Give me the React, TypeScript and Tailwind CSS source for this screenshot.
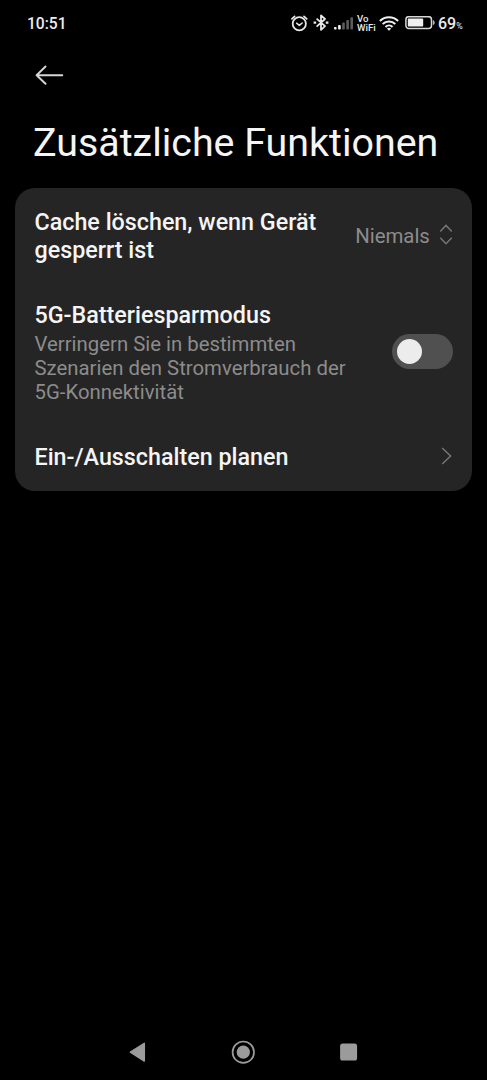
import React, { useState } from 'react';

const AlarmIcon: React.FC = () => (
  <svg width="17" height="17" viewBox="0 0 17 17" fill="none" stroke="#e8e8e8" strokeLinecap="round" strokeLinejoin="round">
    <circle cx="8.3" cy="8.8" r="6.6" strokeWidth="1.8" />
    <path d="M5.6 8.2 8.3 10.4l2.9-2.4" strokeWidth="1.5" />
    <path d="M.9 3.8 3.6 1.3M15.7 3.8 13 1.3" strokeWidth="1.7" />
  </svg>
);

const BluetoothIcon: React.FC = () => (
  <svg width="16" height="18" viewBox="0 0 16 18" fill="none" stroke="#e8e8e8" strokeWidth="1.8" strokeLinejoin="round">
    <path d="M3.6 4.6 12 12.2 8 15.8V1.4L12 5 3.6 12.6" />
    <path d="M.6 8.6h2.6M12.8 8.6h2.6" strokeWidth="2.2" />
  </svg>
);

const SignalIcon: React.FC = () => (
  <svg width="20" height="13" viewBox="0 0 20 13">
    <rect x="0" y="10" width="2.6" height="2.6" rx=".8" fill="#f0f0f0" />
    <rect x="4.1" y="8" width="2.6" height="4.6" rx=".8" fill="#f0f0f0" />
    <rect x="8.2" y="5.6" width="2.6" height="7" rx=".8" fill="#5c5c5c" />
    <rect x="12.3" y="3" width="2.6" height="9.6" rx=".8" fill="#5c5c5c" />
    <rect x="16.4" y=".3" width="2.6" height="12.3" rx=".8" fill="#5c5c5c" />
  </svg>
);

const WifiIcon: React.FC = () => (
  <svg width="20" height="15" viewBox="0 0 20 15" fill="none" stroke="#f0f0f0" strokeWidth="2.1">
    <path d="M.9 5a13 13 0 0 1 18.2 0" />
    <path d="M3.7 8a9 9 0 0 1 12.6 0" />
    <path d="M6.5 10.9a5 5 0 0 1 7 0" />
    <path d="M10 14.8 7.9 12.7a3 3 0 0 1 4.2 0z" fill="#f0f0f0" stroke="none" />
  </svg>
);

const BatteryIcon: React.FC = () => (
  <svg width="31" height="14" viewBox="0 0 31 14">
    <rect x=".9" y=".7" width="25.6" height="11.8" rx="3" fill="none" stroke="#d8d8d8" strokeWidth="1.5" />
    <rect x="2.8" y="2.6" width="15.4" height="8" rx=".8" fill="#f0f0f0" />
    <path d="M28.3 4.6c1.3.3 1.3 3.8 0 4.1z" fill="#d8d8d8" stroke="#d8d8d8" strokeWidth=".6" />
  </svg>
);

const StatusBar: React.FC = () => (
  <div className="flex h-[46px] items-center pl-[27px] text-[#ececec]">
    <div className="w-[263px] pt-[3px] text-[15.6px] font-medium">10:51</div>
    <div className="flex items-center">
      <div className="w-[23px] pl-[.5px]"><AlarmIcon /></div>
      <div className="w-[21px]"><BluetoothIcon /></div>
      <div className="w-[23px] pt-[1px]"><SignalIcon /></div>
      <div className="w-[22px] text-[9.6px] leading-[9px] font-medium">
        <div className="h-[9px]">Vo</div>
        <div className="h-[9px]">WiFi</div>
      </div>
      <div className="w-[26px]"><WifiIcon /></div>
      <div className="w-[33px]"><BatteryIcon /></div>
      <div className="flex items-baseline pt-[2px]">
        <span className="text-base font-medium">69</span>
        <span className="text-[8.8px]">%</span>
      </div>
    </div>
  </div>
);

const App: React.FC = () => {
  const [batterySaver, setBatterySaver] = useState(false);

  return (
    <div className="flex h-[1080px] w-[487px] flex-col overflow-hidden bg-black font-['Roboto','Liberation_Sans',sans-serif]">
      <StatusBar />

      <header className="pt-[19px] pl-[33px]">
        <button className="block" aria-label="Zurück">
          <svg width="32" height="20" viewBox="0 0 32 20" fill="none" stroke="#d6d6d6" strokeWidth="1.9" strokeLinecap="round" strokeLinejoin="round">
            <path d="M29.3 10.2H3.6M12.5 1.5 3.6 10.2l8.9 8.6" />
          </svg>
        </button>
        <h1 className="mt-[34px] text-[39.4px] leading-[48px] whitespace-nowrap text-[#f5f5f5]">
          Zusätzliche Funktionen
        </h1>
      </header>

      <main className="mx-[15px] mt-[21.4px] h-[302.6px] rounded-[20px] bg-[#252525] pr-[19.5px] pl-[19.5px]">
        <div className="flex h-[95px] items-center justify-between">
          <h2 className="w-[300px] pt-[1.4px] text-[23.3px] leading-[27.5px] font-medium text-[#f5f5f5]">
            Cache löschen, wenn Gerät gesperrt ist
          </h2>
          <div className="flex shrink-0 items-center gap-[8.6px] text-[20.4px] text-[#8c8c8c]">
            Niemals
            <svg className="mb-px" width="14" height="22" viewBox="0 0 14 22" fill="none" stroke="#757575" strokeWidth="1.5">
              <path d="M1.2 7.4 7 1.4l5.8 6M1.2 13.7l5.8 6 5.8-6" />
            </svg>
          </div>
        </div>

        <div className="flex h-[139px] items-center justify-between">
          <div>
            <h2 className="text-[23.3px] leading-[28px] font-medium text-[#f5f5f5]">5G-Batteriesparmodus</h2>
            <p className="mt-[3px] w-[320px] text-[20.35px] leading-6 text-[#8c8c8c]">
              Verringern Sie in bestimmten Szenarien den Stromverbrauch der 5G-Konnektivität
            </p>
          </div>
          <button
            role="switch"
            aria-checked={batterySaver}
            aria-label="5G-Batteriesparmodus"
            onClick={() => setBatterySaver(!batterySaver)}
            className={
              batterySaver
                ? 'mb-[2px] flex h-[35px] w-[60.5px] shrink-0 items-center justify-end rounded-full bg-[#277af7] px-[5px]'
                : 'mb-[2px] flex h-[35px] w-[60.5px] shrink-0 items-center rounded-full bg-[#505050] px-[5px]'
            }
          >
            <span className="h-[25px] w-[25px] rounded-full bg-[#ececec]" />
          </button>
        </div>

        <div className="flex h-[70px] items-center justify-between">
          <h2 className="text-[23.3px] leading-[28px] font-medium text-[#f5f5f5]">Ein-/Ausschalten planen</h2>
          <svg className="mb-[2px]" width="12" height="18" viewBox="0 0 12 18" fill="none" stroke="#757575" strokeWidth="1.5">
            <path d="m1.2 1 8.4 8-8.4 8" />
          </svg>
        </div>
      </main>

      <nav className="mt-auto flex h-[56px] items-center justify-between pr-[129px] pl-[128px]">
        <button aria-label="Zurück">
          <svg width="18" height="22" viewBox="0 0 18 22" fill="#9b9b9b" stroke="#9b9b9b" strokeWidth="1.5" strokeLinejoin="round">
            <path d="M2.4 11.2 16.3 2.4v17.6z" />
          </svg>
        </button>
        <button aria-label="Startseite">
          <svg width="24" height="24" viewBox="0 0 24 24" fill="none" stroke="#9b9b9b">
            <circle cx="12.3" cy="12.2" r="10.7" strokeWidth="1.7" />
            <circle cx="12.3" cy="12.2" r="6.6" fill="#9b9b9b" stroke="none" />
          </svg>
        </button>
        <button aria-label="Letzte Apps">
          <svg width="18" height="18" viewBox="0 0 18 18">
            <rect x=".1" y=".6" width="17" height="17" rx="2.6" fill="#9b9b9b" />
          </svg>
        </button>
      </nav>
    </div>
  );
};

export default App;
